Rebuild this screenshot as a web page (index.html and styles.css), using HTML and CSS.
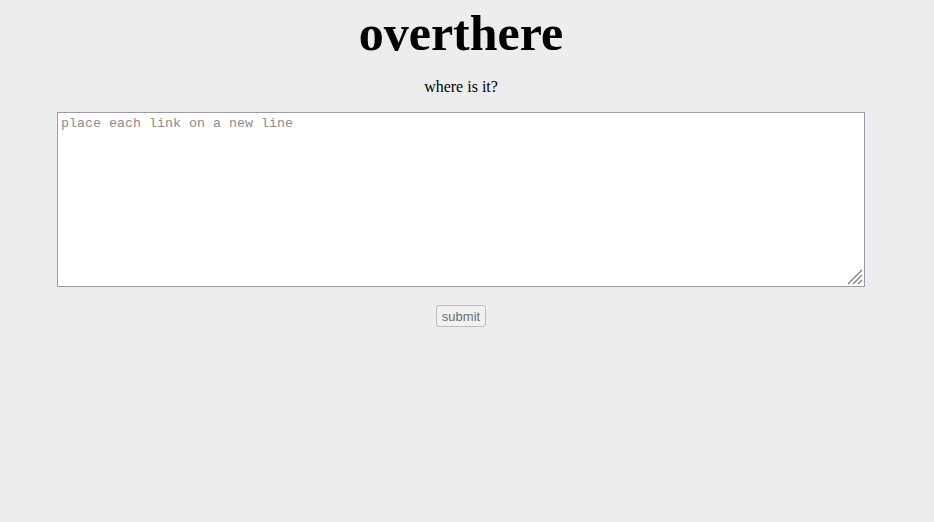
FILE: index.html
```html
<!DOCTYPE html>
<html>
<head>
<meta charset="utf-8">
<link rel="stylesheet" href="styles.css">
</head>
<body>
<div class="page">
  <h1 class="title">overthere</h1>
  <p class="subtitle">where is it?</p>
  <div class="field">
    <textarea class="links" placeholder="place each link on a new line"></textarea>
    <svg class="grip" width="16" height="16" viewBox="0 0 16 16" aria-hidden="true">
      <path d="M1 15 L15 1 M6 15 L15 6 M11 15 L15 11" stroke="#7a7a7a" stroke-width="1.2" fill="none"/>
    </svg>
  </div>
  <button class="submit" disabled>submit</button>
</div>
</body>
</html>
```

FILE: styles.css
```css
html, body {
  margin: 0;
  padding: 0;
  background: #ededed;
}
.page {
  width: 922px;
  display: flex;
  flex-direction: column;
  align-items: center;
  font-family: "Liberation Serif", "Times New Roman", serif;
}
.title {
  margin: 5px 0 0;
  font-size: 50px;
  font-weight: bold;
  line-height: 57px;
  color: #000;
}
.subtitle {
  margin: 16px 0 0;
  font-size: 16px;
  line-height: 18px;
  color: #000;
}
.field {
  position: relative;
  margin-top: 16px;
  width: 808px;
  height: 175px;
}
.links {
  display: block;
  box-sizing: border-box;
  margin: 0;
  width: 100%;
  height: 100%;
  border: 1px solid #9b9bae;
  background: #fff;
  padding: 3px;
  font-family: "Liberation Mono", "Courier New", monospace;
  font-size: 13.33px;
  resize: none;
  outline: none;
}
.links::placeholder {
  color: #8c8c8c;
}
.grip {
  position: absolute;
  right: 2px;
  bottom: 2px;
  pointer-events: none;
}
.submit {
  margin-top: 18px;
  height: 22px;
  padding: 0 5px;
  font-family: "Liberation Sans", Arial, sans-serif;
  font-size: 13px;
  color: #6d6d6d;
  background: #f1f1f1;
  border: 1px solid #bdbdbd;
  border-radius: 3px;
}
```
